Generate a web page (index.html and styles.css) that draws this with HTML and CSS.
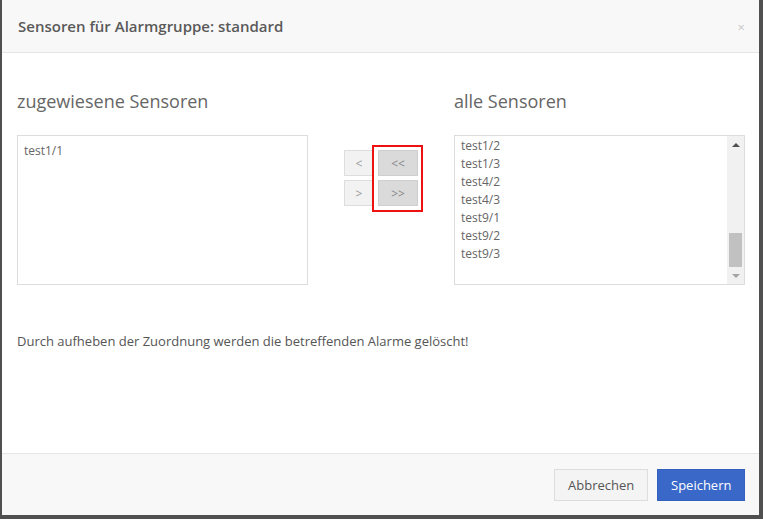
FILE: index.html
```html
<!DOCTYPE html>
<html>

<head>
    <title>Sensoren für Alarmgruppe</title>
    <meta charset="utf-8">
    <link rel="stylesheet" href="styles.css">
</head>

<body>
    <div class="modal">
        <div class="modal-header">
            <span class="modal-title">Sensoren für Alarmgruppe: standard</span>
            <span class="close">×</span>
        </div>

        <div class="modal-body">
            <div class="columns">
                <div class="col">
                    <h4 class="col-title">zugewiesene Sensoren</h4>
                    <div class="listbox">
                        <div class="items first">
                            <div class="item">test1/1</div>
                        </div>
                    </div>
                </div>

                <div class="col-mid">
                    <div class="move-buttons">
                        <div class="btn-row">
                            <button class="btn-move small">&lt;</button>
                            <button class="btn-move wide">&lt;&lt;</button>
                        </div>
                        <div class="btn-row">
                            <button class="btn-move small">&gt;</button>
                            <button class="btn-move wide">&gt;&gt;</button>
                        </div>
                        <div class="highlight"></div>
                    </div>
                </div>

                <div class="col">
                    <h4 class="col-title">alle Sensoren</h4>
                    <div class="listbox">
                        <div class="items">
                            <div class="item">test1/2</div>
                            <div class="item">test1/3</div>
                            <div class="item">test4/2</div>
                            <div class="item">test4/3</div>
                            <div class="item">test9/1</div>
                            <div class="item">test9/2</div>
                            <div class="item">test9/3</div>
                        </div>
                        <div class="scrollbar">
                            <div class="arrow up"></div>
                            <div class="track">
                                <div class="thumb"></div>
                            </div>
                            <div class="arrow down"></div>
                        </div>
                    </div>
                </div>
            </div>

            <p class="hint">Durch aufheben der Zuordnung werden die betreffenden Alarme gelöscht!</p>
        </div>

        <div class="modal-footer">
            <button class="btn btn-default">Abbrechen</button>
            <button class="btn btn-primary">Speichern</button>
        </div>
    </div>
</body>

</html>
```

FILE: styles.css
```css
body {
    margin: 0;
    background-color: #505050;
    font-family: "Open Sans", "Liberation Sans", sans-serif;
    height: 519px;
    overflow: hidden;
}

.modal {
    margin-left: 2px;
    width: 757px;
    height: 515px;
    background-color: #fff;
    display: flex;
    flex-direction: column;
}

.modal-header {
    height: 52px;
    background-color: #f8f8f8;
    border-bottom: 1px solid #e5e5e5;
    display: flex;
    align-items: center;
    justify-content: space-between;
    padding: 0 14px 0 16px;
}

.modal-title {
    font-size: 15px;
    font-weight: 600;
    color: #5a5a5a;
}

.close {
    font-size: 13px;
    color: #c8c8c8;
    margin-top: 2px;
}

.modal-body {
    flex: 1;
    padding: 38px 14px 0 15px;
}

.columns {
    display: flex;
}

.col {
    width: 291px;
}

.col-title {
    margin: 0 0 24px 0;
    font-size: 18px;
    line-height: 20px;
    font-weight: 400;
    color: #666;
}

.listbox {
    height: 148px;
    border: 1px solid #ddd;
    display: flex;
}

.items {
    flex: 1;
    padding: 1px 6px 0 6px;
}

.items.first {
    padding-top: 6px;
}

.item {
    font-size: 12px;
    line-height: 18px;
    color: #666;
}

.scrollbar {
    width: 17px;
    background-color: #f1f1f1;
    display: flex;
    flex-direction: column;
}

.arrow {
    height: 17px;
    display: flex;
    align-items: center;
    justify-content: center;
}

.arrow.up::after {
    content: "";
    border-left: 4px solid transparent;
    border-right: 4px solid transparent;
    border-bottom: 4px solid #505050;
}

.arrow.down::after {
    content: "";
    border-left: 4px solid transparent;
    border-right: 4px solid transparent;
    border-top: 4px solid #a3a3a3;
}

.track {
    flex: 1;
    display: flex;
    flex-direction: column;
    justify-content: flex-end;
    padding: 0 2px;
}

.thumb {
    height: 34px;
    background-color: #c1c1c1;
}

.col-mid {
    flex: 1;
    display: flex;
    justify-content: center;
    padding-top: 59px;
}

.move-buttons {
    position: relative;
    display: flex;
    flex-direction: column;
    gap: 4px;
    align-self: flex-start;
}

.btn-row {
    display: flex;
    gap: 4px;
}

.btn-move {
    height: 26px;
    border: 1px solid #ddd;
    background-color: #f2f2f2;
    color: #999;
    font-family: "Open Sans", "Liberation Sans", sans-serif;
    font-size: 12px;
    padding: 0;
}

.btn-move.small {
    width: 30px;
}

.btn-move.wide {
    width: 40px;
    background-color: #dadada;
    border-color: #cfcfcf;
    color: #888;
}

.highlight {
    position: absolute;
    left: 28px;
    top: -5px;
    width: 47px;
    height: 63px;
    border: 2px solid #ee1111;
}

.hint {
    margin: 47px 0 0 0;
    font-size: 13px;
    line-height: 18px;
    color: #555;
}

.modal-footer {
    height: 46px;
    border-top: 1px solid #e5e5e5;
    background-color: #f8f8f8;
    padding: 15px 14px 0 15px;
    display: flex;
    justify-content: flex-end;
    align-items: flex-start;
    gap: 9px;
}

.btn {
    height: 32px;
    font-family: "Open Sans", "Liberation Sans", sans-serif;
    font-size: 13px;
    border: 1px solid #ddd;
    padding: 0 13px;
}

.btn-default {
    width: 94px;
    background-color: #f4f4f4;
    color: #555;
}

.btn-primary {
    width: 88px;
    background-color: #3a68c9;
    border-color: #3561be;
    color: #fff;
}
```
